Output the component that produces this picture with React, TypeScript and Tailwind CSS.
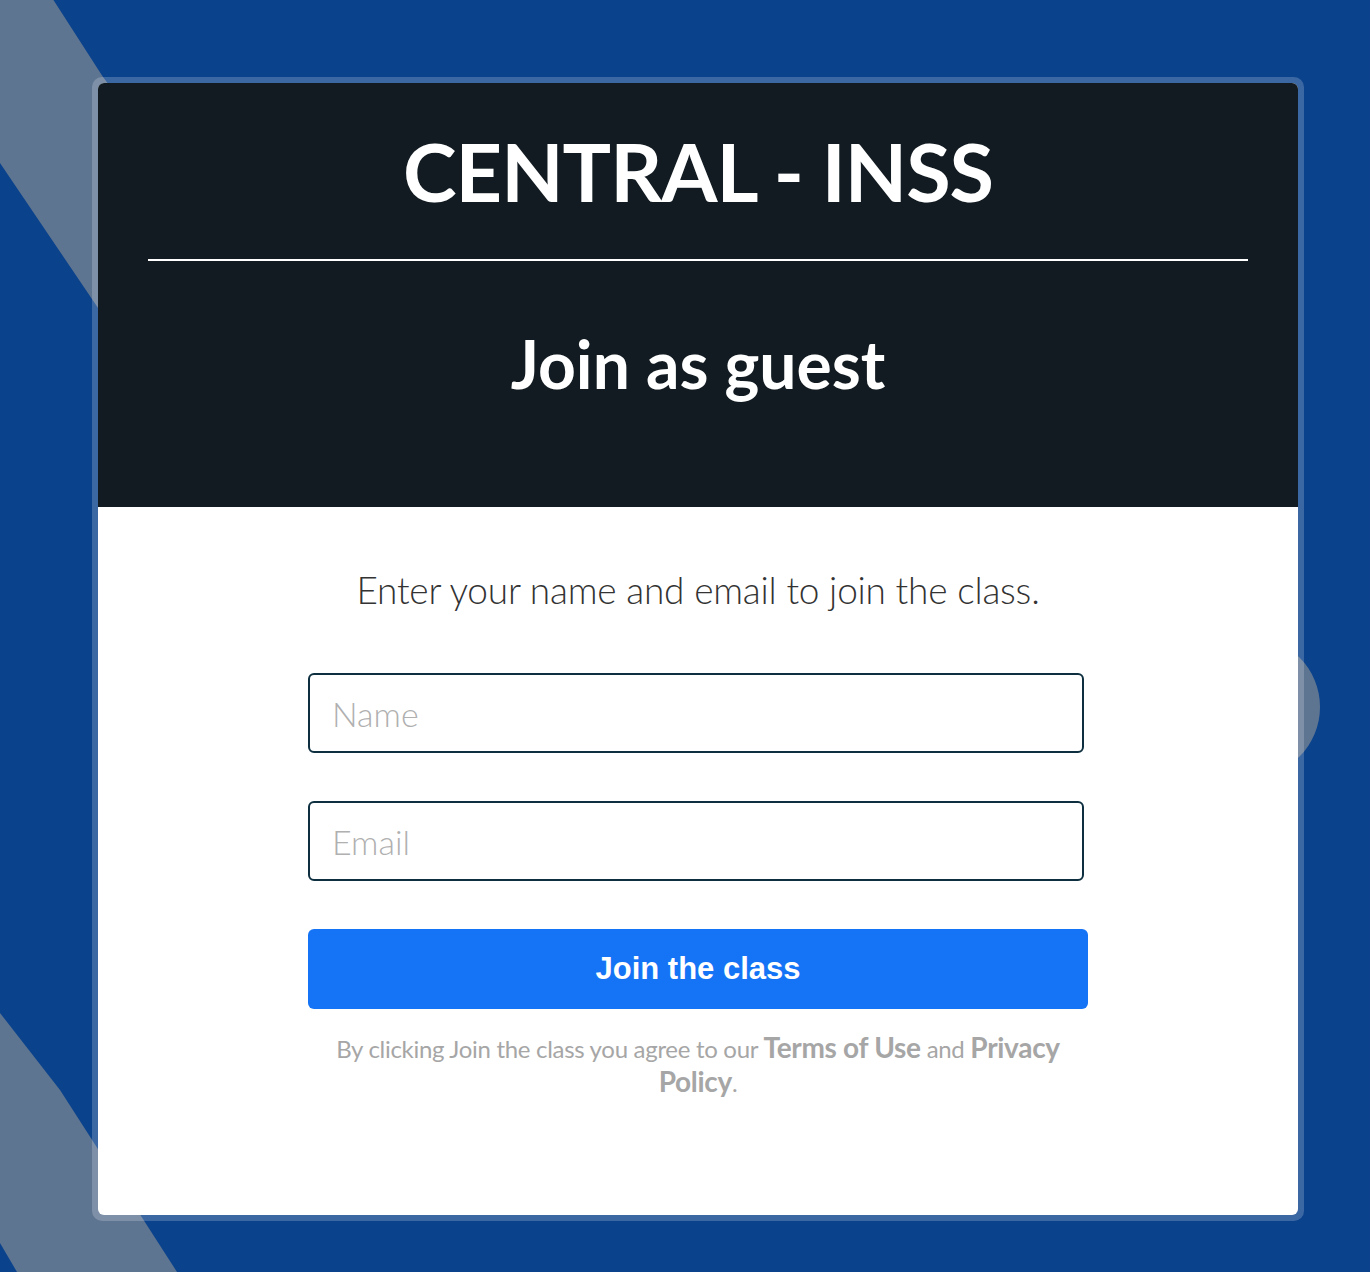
import React from "react";

export default function App() {
  return (
    <div className="relative w-[1370px] h-[1272px] overflow-hidden bg-[#0b428c]" style={{ fontFamily: "Lato, 'Liberation Sans', sans-serif" }}>
      <svg className="absolute inset-0" width="1370" height="1272" viewBox="0 0 1370 1272">
        <polygon points="0,-10 47,-10 103,77 180,180 140,370 0,163" fill="#5e7591" />
        <polygon points="0,1013 60,1090 177,1272 17,1272 0,1243" fill="#5e7591" />
        <circle cx="1250" cy="707" r="70" fill="#5e7591" />
      </svg>
      <div className="relative pt-[77px] pl-[92px]">
        <div className="w-[1212px] h-[1144px] rounded-[10px] bg-white/20 p-[6px]">
          <div className="h-full rounded-[6px] overflow-hidden bg-white flex flex-col">
            <div className="bg-[#111b21] h-[424px] flex flex-col items-center px-[50px]">
              <div className="mt-[27px] h-[120px] flex items-center text-white font-bold text-[81px] leading-none tracking-[-1px]" style={{ fontFamily: "Lato, sans-serif" }}>
                CENTRAL - INSS
              </div>
              <div className="mt-[29px] w-full h-[2px] bg-white" />
              <div className="mt-[70px] text-white font-bold text-[66px] leading-none" style={{ fontFamily: "Lato, sans-serif" }}>
                Join as guest
              </div>
            </div>
            <div className="flex flex-col items-center">
              <p className="mt-[61px] text-[37px] font-light text-[#333] leading-[44px] tracking-[-0.2px]">
                Enter your name and email to join the class.
              </p>
              <div className="mt-[61px] w-[780px] flex flex-col">
                <input
                  placeholder="Name"
                  className="w-[776px] h-[80px] border-2 border-[#0d2f3f] rounded-[6px] px-[22px] text-[34px] font-light outline-none placeholder:text-[#b0b0b0]"
                  style={{ fontFamily: "Lato, sans-serif", fontWeight: 300 }}
                />
                <input
                  placeholder="Email"
                  className="mt-[48px] w-[776px] h-[80px] border-2 border-[#0d2f3f] rounded-[6px] px-[22px] text-[34px] font-light outline-none placeholder:text-[#b0b0b0]"
                  style={{ fontFamily: "Lato, sans-serif", fontWeight: 300 }}
                />
                <button className="mt-[48px] w-[780px] h-[80px] rounded-[6px] bg-[#1573f6] text-white text-[31px] font-bold" style={{ fontFamily: "'Liberation Sans', Arial, sans-serif" }}>
                  Join the class
                </button>
                <p className="mt-[22px] -mx-[10px] text-center text-[#a6a6a6] text-[24px] leading-[32px] tracking-[-0.3px]">
                  By clicking Join the class you agree to our <span className="font-bold text-[28px] leading-[32px]">Terms of Use</span> and <span className="font-bold text-[28px] leading-[32px]">Privacy Policy</span>.
                </p>
              </div>
            </div>
          </div>
        </div>
      </div>
    </div>
  );
}
